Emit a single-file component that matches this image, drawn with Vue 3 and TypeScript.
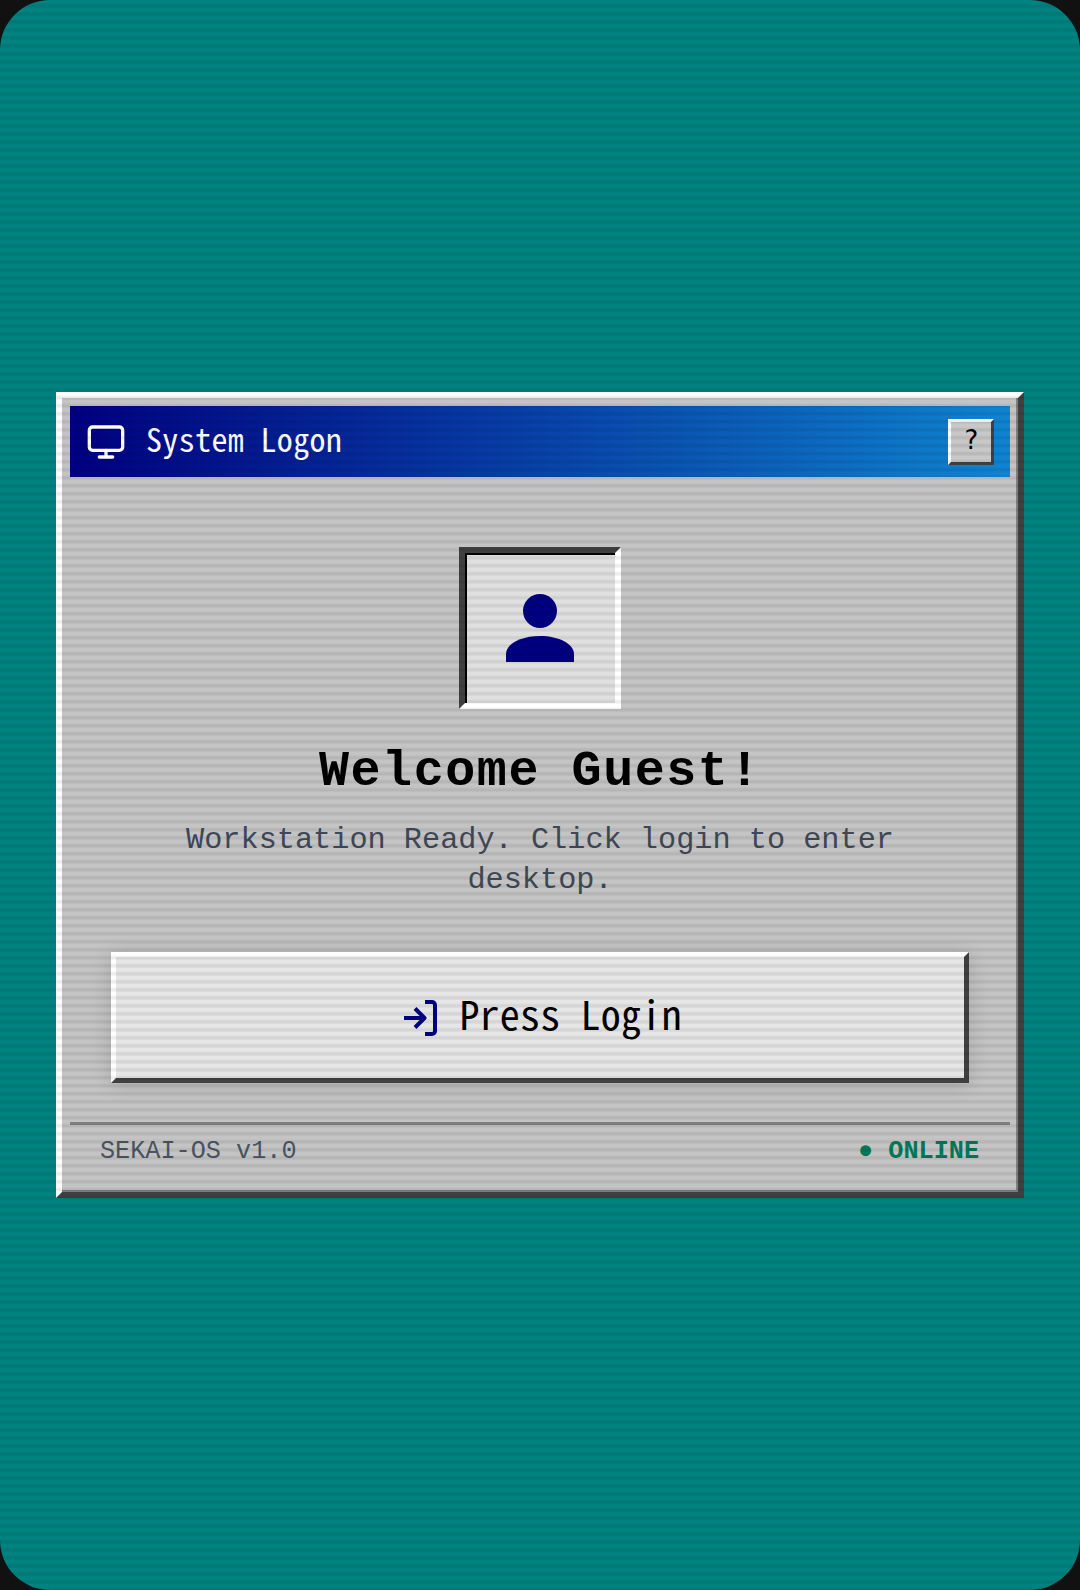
<script setup lang="ts">
</script>

<template>
  <div class="screen">
    <div class="window">
      <div class="titlebar">
        <div class="title">
          <svg class="monitor" viewBox="0 0 24 24" fill="none" stroke="#fff" stroke-width="2" stroke-linecap="round" stroke-linejoin="round">
            <rect x="2" y="3" width="20" height="14" rx="2" />
            <path d="M8 21h8M12 17v4" />
          </svg>
          <span class="title-text">System Logon</span>
        </div>
        <button class="help"><span>?</span></button>
      </div>
      <div class="body">
        <div class="avatar">
          <svg viewBox="0 0 68 68" fill="#000080" class="person">
            <circle cx="34" cy="17" r="17" />
            <path d="M0 68v-8C0 50 15 42 34 42s34 8 34 18v8z" />
          </svg>
        </div>
        <h1>Welcome Guest!</h1>
        <p>Workstation Ready. Click login to enter desktop.</p>
        <button class="login">
          <svg class="enter" viewBox="0 0 33 36" fill="none" stroke="#000080" stroke-width="4" stroke-linejoin="round">
            <path d="M21 2h7a3 3 0 0 1 3 3v26a3 3 0 0 1-3 3h-7" />
            <path d="M0 18h20" />
            <path d="M11 8.5l9.5 9.5l-9.5 9.5" />
          </svg>
          <span class="login-text">Press Login</span>
        </button>
      </div>
      <div class="status">
        <span class="ver">SEKAI-OS v1.0</span>
        <span class="online">● ONLINE</span>
      </div>
    </div>
    <div class="scan"></div>
  </div>
</template>

<style>
html, body { margin: 0; background: #111; }
</style>

<style scoped>
.screen {
  position: relative;
  width: 1080px;
  height: 1590px;
  background: #008280;
  border-radius: 50px;
  overflow: hidden;
  display: flex;
  align-items: center;
  justify-content: center;
  font-family: "Liberation Mono", monospace;
}
.scan {
  position: absolute;
  inset: 0;
  pointer-events: none;
  background: repeating-linear-gradient(to bottom, rgba(0,0,0,0) 0, rgba(0,0,0,0) 3px, rgba(0,0,0,0.075) 5px, rgba(0,0,0,0.075) 7px, rgba(0,0,0,0) 8px);
}
.window {
  width: 968px;
  box-sizing: border-box;
  background: #c4c4c4;
  border: 6px solid;
  border-color: #fff #404040 #404040 #fff;
  box-shadow: inset -2px -2px 0 #808080;
  padding: 8px;
  display: flex;
  flex-direction: column;
}
.titlebar {
  height: 71px;
  background: linear-gradient(90deg, #000080, #1084d0);
  padding: 0 16px;
  display: flex;
  align-items: center;
  justify-content: space-between;
}
.title {
  display: flex;
  align-items: center;
  gap: 20px;
  color: #fff;
  font-family: "Noto Sans Mono CJK JP", "DejaVu Sans Mono", monospace;
  font-size: 32px;
  letter-spacing: 0.35px;
}
.title-text { padding-bottom: 8px; }
.monitor { width: 40px; height: 40px; }
.help {
  width: 46px;
  height: 46px;
  padding: 0 0 4px;
  background: #c8c8c8;
  border: 3px solid;
  border-color: #fff #404040 #404040 #fff;
  color: #000;
  font-family: "DejaVu Sans Mono", monospace;
  font-size: 26px;
  line-height: 1;
}
.body {
  display: flex;
  flex-direction: column;
  align-items: center;
  padding: 70px 32px 39px;
}
.avatar {
  width: 162px;
  height: 162px;
  box-sizing: border-box;
  background: #e0e0e0;
  border: 6px solid;
  border-color: #404040 #fff #fff #404040;
  box-shadow: inset 2px 2px 0 #000;
  display: flex;
  align-items: center;
  justify-content: center;
}
.person { width: 68px; height: 68px; }
h1 {
  margin: 35px 0 0;
  font-size: 50px;
  line-height: 56px;
  font-weight: 700;
  letter-spacing: 1.57px;
  color: #000;
}
p {
  margin: 20px 0 0;
  width: 760px;
  text-align: center;
  font-size: 30.25px;
  line-height: 40px;
  color: #404858;
}
.login {
  margin-top: 52px;
  width: 858px;
  height: 131px;
  padding: 0 0 0 6px;
  background: #e6e6e6;
  border: 5px solid;
  border-color: #fff #404040 #404040 #fff;
  box-shadow: 0 2px 18px rgba(0,0,0,0.14);
  display: flex;
  align-items: center;
  justify-content: center;
  gap: 22px;
  font-family: "Noto Sans Mono CJK JP", "DejaVu Sans Mono", monospace;
  font-size: 40px;
  letter-spacing: 0.2px;
  color: #000;
}
.login-text { padding-bottom: 9px; }
.enter { width: 33px; height: 36px; }
.status {
  border-top: 3px solid #808080;
  display: flex;
  justify-content: space-between;
  padding: 12px 31px 17px 30px;
  font-size: 25.2px;
  line-height: 30px;
}
.ver { color: #4b5563; }
.online { color: #047857; font-weight: 700; }
</style>
